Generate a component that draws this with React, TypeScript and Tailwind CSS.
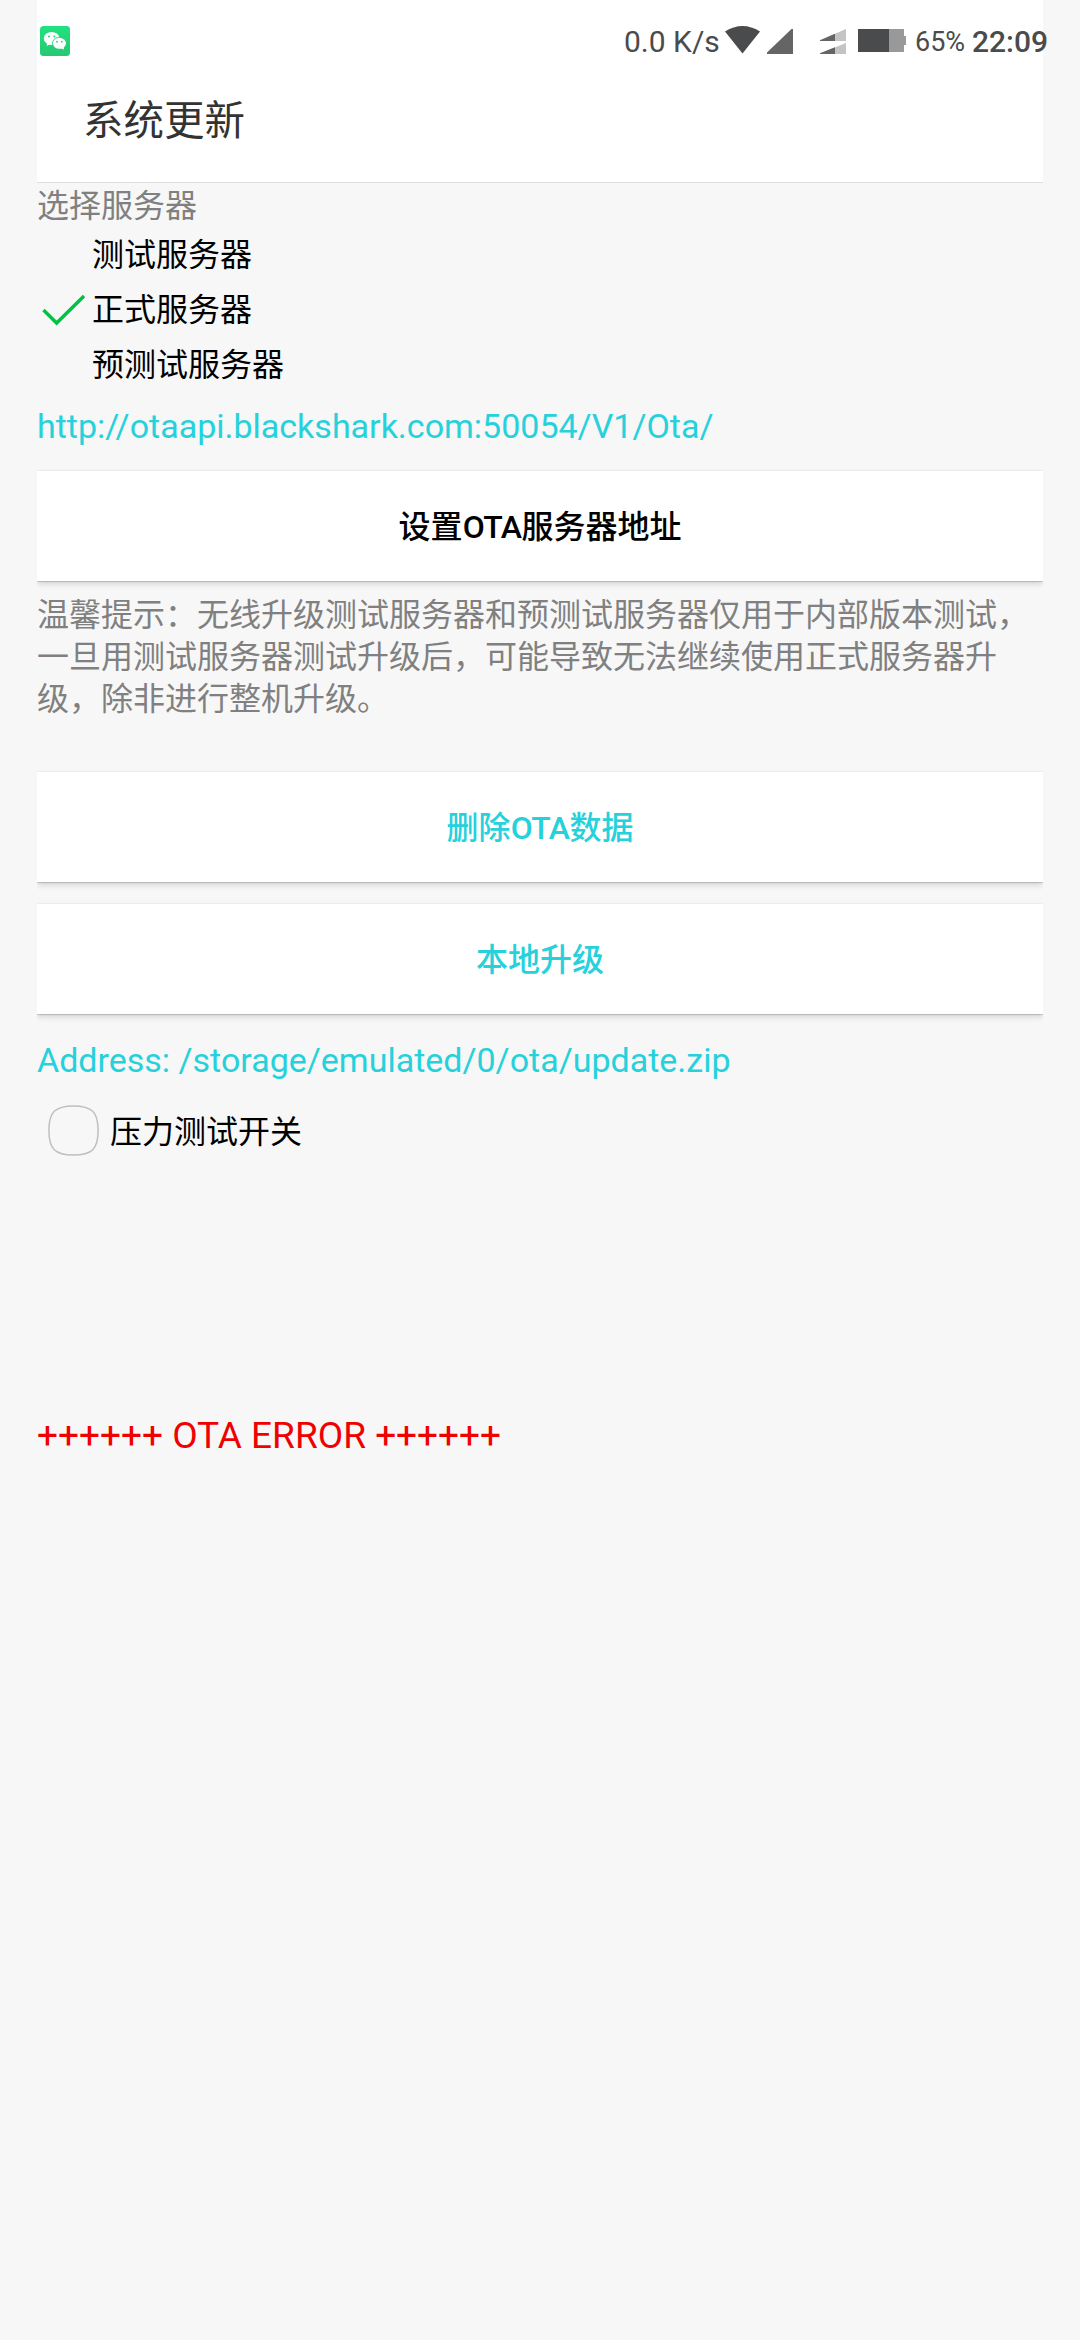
import type { ReactNode } from "react";
import clsx from "clsx";

const SERVERS = [
    { name: "测试服务器", selected: false },
    { name: "正式服务器", selected: true },
    { name: "预测试服务器", selected: false },
];

function WeChatIcon() {
    return (
        <svg className="w-[30px] h-[30px]" viewBox="0 0 30 30">
            <defs>
                <linearGradient id="wechat" x1="0" y1="0" x2="0" y2="1">
                    <stop offset="0" stopColor="#20e281" />
                    <stop offset="1" stopColor="#27c871" />
                </linearGradient>
            </defs>
            <rect width="30" height="30" rx="3.5" fill="url(#wechat)" />
            <path d="M7.5 16.5 L6.5 20 L10.5 18 Z" fill="#fff" />
            <ellipse cx="11.6" cy="12.4" rx="7.8" ry="6.5" fill="#fff" />
            <ellipse cx="19.3" cy="17.3" rx="7.3" ry="6.2" fill="#23d578" />
            <path d="M20 22 L24 23.4 L23.5 20 Z" fill="#fff" />
            <ellipse cx="19.4" cy="17.3" rx="6.6" ry="5.5" fill="#fff" />
            <circle cx="9" cy="10.4" r="1" fill="#23d578" />
            <circle cx="14.4" cy="10.4" r="1" fill="#23d578" />
            <circle cx="17" cy="15.7" r="0.9" fill="#23d578" />
            <circle cx="21.7" cy="15.7" r="0.9" fill="#23d578" />
        </svg>
    );
}

function StatusBar() {
    return (
        <div className="flex h-[82px] items-start justify-between pl-[3px] -mr-2 text-[#4a4b4d]">
            <div className="pt-[26px]">
                <WeChatIcon />
            </div>
            <div className="flex items-start pt-[22px] leading-[40px]">
                <span className="w-[101px] text-[30px] whitespace-nowrap">0.0 K/s</span>
                {/* wifi */}
                <svg className="mt-1 w-[35px] h-[28px]" viewBox="0 0 35 28">
                    <path d="M0 5.5 Q17.5 -5.5 35 5.5 L17.5 27.5 Z" fill="#4a4b4d" />
                </svg>
                {/* sim 1 */}
                <svg className="mt-[7px] ml-[7px] w-[26px] h-[25px]" viewBox="0 0 26 25">
                    <path d="M0 25 V23.5 L24.5 0 H26 V25 Z" fill="#656565" />
                </svg>
                {/* sim 2, two stacked levels */}
                <svg className="mt-[7px] ml-[27px] w-[26px] h-[25px]" viewBox="0 0 26 25">
                    <path d="M0 12 V11.3 L26 0 V12 Z M0 25 V24.3 L26 14 V25 Z" fill="#c4c4c4" />
                    <path d="M0 12 V11.3 L15 4.8 V12 Z M0 25 V24.3 L15 18.3 V25 Z" fill="#656565" />
                </svg>
                {/* battery */}
                <svg className="mt-[7px] ml-[12px] w-[48px] h-[23px]" viewBox="0 0 48 23">
                    <rect width="46" height="23" fill="#999" />
                    <rect x="46" y="7" width="2" height="9" fill="#999" />
                    <rect width="31" height="23" fill="#4a4b4d" />
                </svg>
                <span className="ml-[9px] w-[57px] text-[27px] whitespace-nowrap">65%</span>
                <span className="w-[79px] text-[30px] font-medium whitespace-nowrap">22:09</span>
            </div>
        </div>
    );
}

function ActionButton({ children, className }: { children: ReactNode; className?: string }) {
    return (
        <button
            className={clsx(
                "block w-full h-[110px] pt-[2px] bg-white text-[32px] leading-[42px] font-medium shadow-[0_0_1px_rgba(0,0,0,0.16),0_1px_1px_rgba(0,0,0,0.12),0_3px_6px_rgba(0,0,0,0.14)]",
                className
            )}
        >
            {children}
        </button>
    );
}

export default function App() {
    return (
        <div className="min-h-[2340px] bg-[#f7f7f7] px-[37px] font-[Roboto,'Noto_Sans_CJK_SC',sans-serif] text-[32px] text-black">
            <header className="h-[183px] bg-white border-b border-[#e0e0e0]">
                <StatusBar />
                <h1 className="pl-[46px] pt-[15px] text-[40.5px] leading-[48px] text-[#333]">系统更新</h1>
            </header>

            <main className="overflow-x-clip">
                <p className="mt-[2px] h-[42px] leading-[42px] text-[#808080]">选择服务器</p>

                <ul>
                    {SERVERS.map((server) => (
                        <li key={server.name} className="flex h-[55px] items-center">
                            <div className="w-[55px] pl-[5px]">
                                {server.selected && (
                                    <svg className="w-[43px] h-[32px]" viewBox="0 0 43 32" fill="none">
                                        <path d="M1.5 16 L14.6 29 L42 2" stroke="#00c344" strokeWidth="3.4" />
                                    </svg>
                                )}
                            </div>
                            <span>{server.name}</span>
                        </li>
                    ))}
                </ul>

                <p className="mt-[14px] text-[34px] leading-[40px] text-[#26d1dc]">http://otaapi.blackshark.com:50054/V1/Ota/</p>

                <ActionButton className="mt-[25px]">
                    设置<span className="tracking-[-0.6px]">OTA</span>服务器地址
                </ActionButton>

                <p className="mt-[13px] leading-[42px] text-[#808080]">
                    温馨提示：无线升级测试服务器和预测试服务器仅用于内部版本测试，
                    <br />
                    一旦用测试服务器测试升级后，可能导致无法继续使用正式服务器升
                    <br />
                    级，除非进行整机升级。
                </p>

                <ActionButton className="mt-[52px] text-[#26d1dc]">
                    删除<span className="tracking-[-0.6px]">OTA</span>数据
                </ActionButton>
                <ActionButton className="mt-[22px] text-[#26d1dc]">本地升级</ActionButton>

                <p className="mt-[26px] text-[34px] leading-[40px] text-[#26d1dc]">Address: /storage/emulated/0/ota/update.zip</p>

                <label className="mt-[24px] flex h-[54px] items-center">
                    <svg className="ml-[11px] mb-[2px] w-[51px] h-[51px]" viewBox="0 0 51 51" fill="none">
                        <path
                            d="M25.5 0.9 C44 0.9 50.1 7 50.1 25.5 C50.1 44 44 50.1 25.5 50.1 C7 50.1 0.9 44 0.9 25.5 C0.9 7 7 0.9 25.5 0.9 Z"
                            stroke="#bfbfbf"
                            strokeWidth="1.5"
                        />
                    </svg>
                    <span className="ml-[11px] pt-[2px]">压力测试开关</span>
                </label>

                <p className="mt-[257px] text-[37px] leading-[42px] text-[#f00000]">++++++ OTA ERROR ++++++</p>
            </main>
        </div>
    );
}
